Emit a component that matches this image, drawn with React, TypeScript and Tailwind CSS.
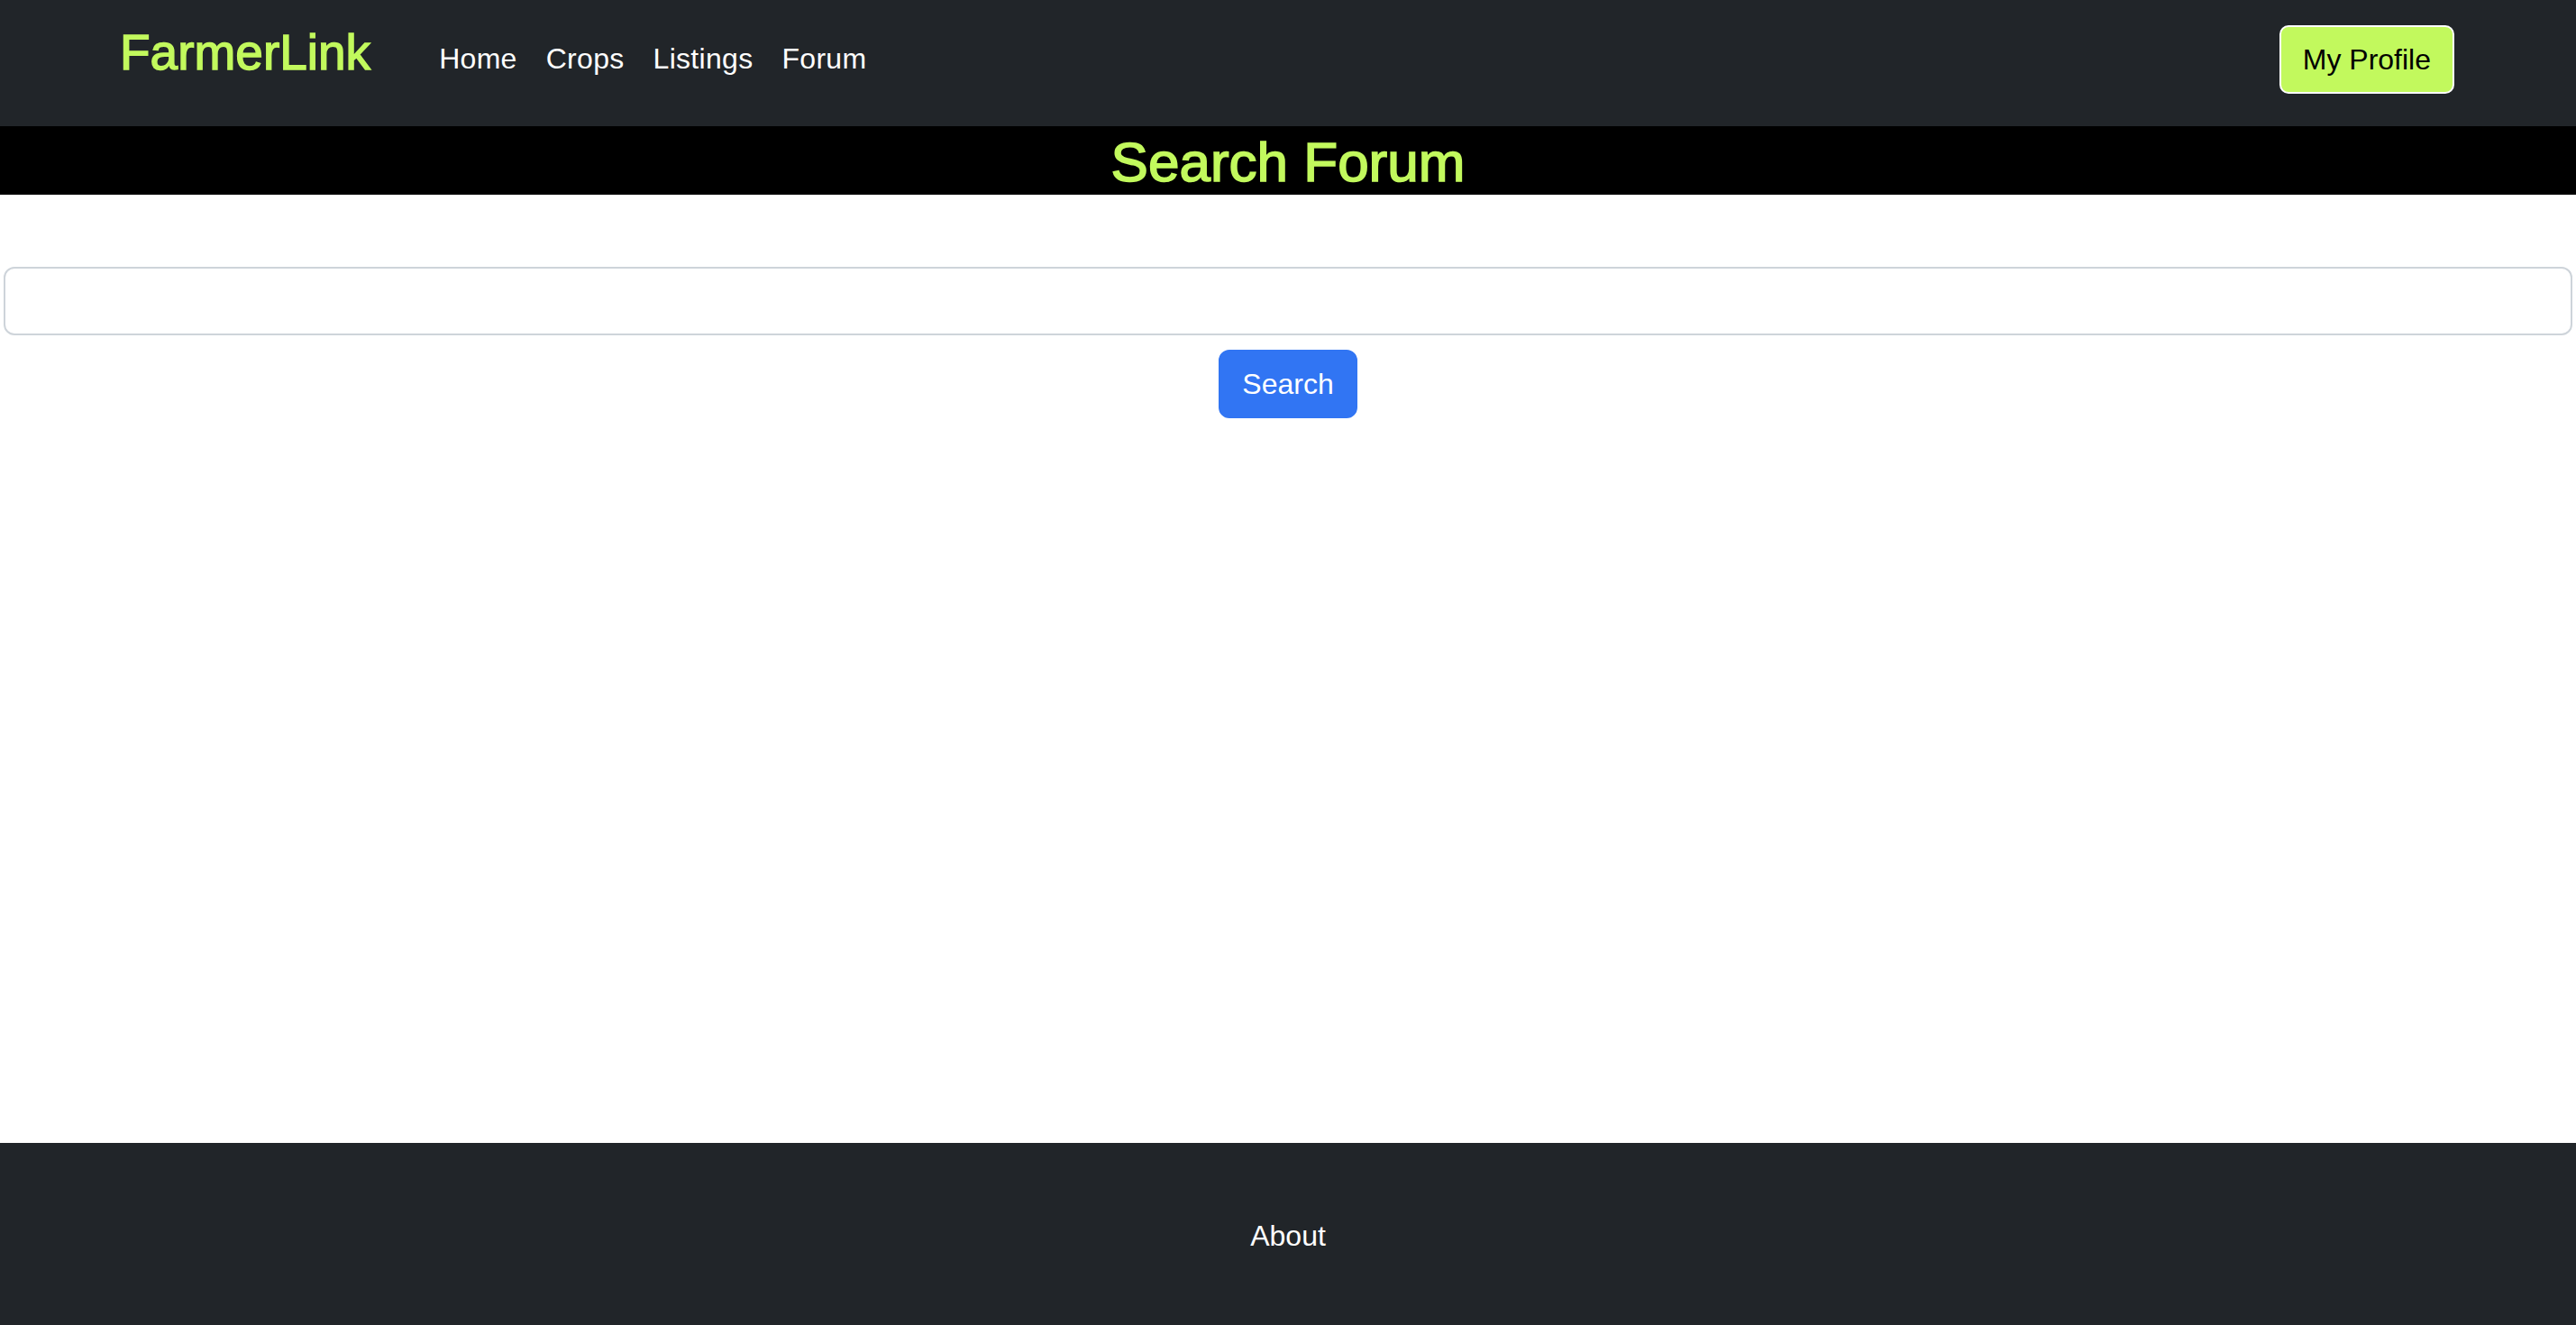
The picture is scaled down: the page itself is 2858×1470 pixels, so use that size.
export default function App() {
  const links = ["Home", "Crops", "Listings", "Forum"];

  return (
    <div className="flex min-h-screen flex-col bg-white font-['Liberation_Sans',Arial,sans-serif]">
      {/* Navbar */}
      <nav className="h-[140px] bg-[#212529]">
        <div className="flex items-start pl-[133px] pr-[135px]">
          <a href="#" className="mt-[31px] text-[55px] leading-none text-[#c2f95d] [-webkit-text-stroke:1.4px_#c2f95d]">
            FarmerLink
          </a>
          <ul className="ml-[60px] mt-[49px] flex text-[32px] leading-none text-white">
            {links.map((l) => (
              <li key={l}>
                <a href="#" className="px-4 tracking-[0.3px]">{l}</a>
              </li>
            ))}
          </ul>
          <button className="ml-auto mt-[28px] rounded-[10px] border-2 border-white bg-[#c2f95d] px-6 py-3 text-[32px] leading-[48px] text-black">
            My Profile
          </button>
        </div>
      </nav>

      {/* Title band */}
      <h2 className="h-[76px] overflow-hidden bg-black text-center text-[62px] leading-[80px] text-[#c2f95d] [-webkit-text-stroke:1.6px_#c2f95d]">
        Search Forum
      </h2>

      {/* Search */}
      <main className="flex flex-1 flex-col items-center px-[4px] pt-[80px]">
        <input
          type="text"
          className="h-[76px] w-full rounded-[12px] border-2 border-[#ced4da] bg-white px-6 text-[32px] outline-none"
        />
        <button className="mt-[16px] rounded-[12px] border-2 border-[#3175f3] bg-[#3175f3] px-6 py-3 text-[32px] leading-[48px] text-white">
          Search
        </button>
      </main>

      {/* Footer */}
      <footer className="h-[202px] bg-[#212529] pt-[79px] text-center text-[32px] leading-[48px]">
        <a href="#" className="text-white">About</a>
      </footer>
    </div>
  );
}
